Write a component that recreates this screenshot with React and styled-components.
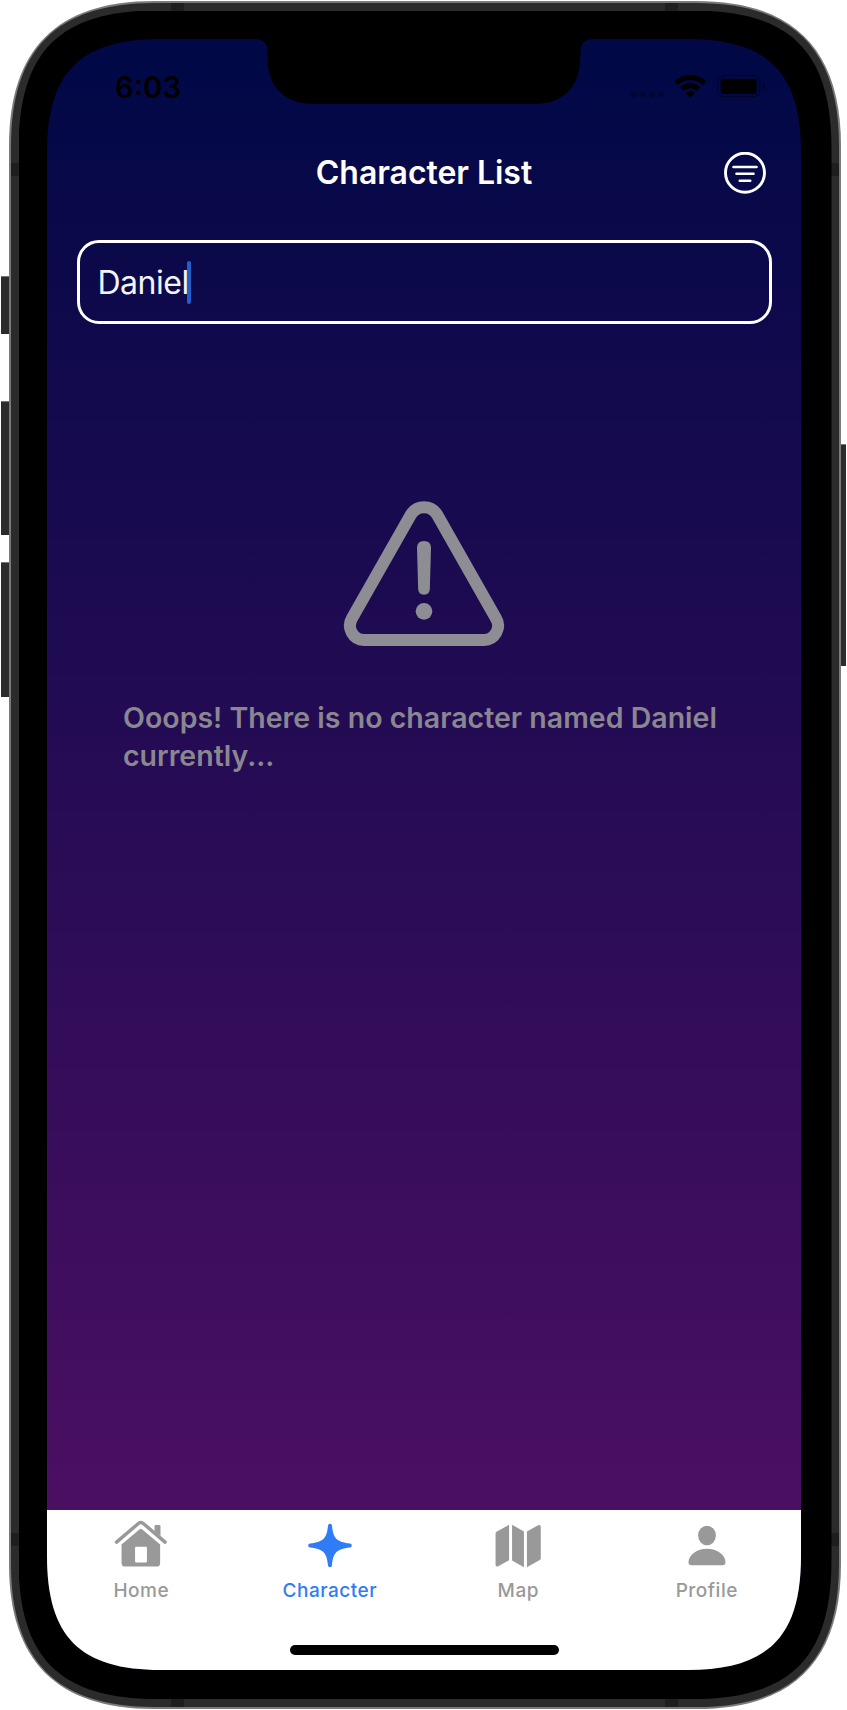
import React from 'react';
import styled, { createGlobalStyle } from 'styled-components';

const GlobalStyle = createGlobalStyle`
  * { box-sizing: border-box; }
  body { margin: 0; background: #fff; }
`;

/* Rounded rectangle with continuous (squircle-like) corners.
   e: where the straight edge ends, a: how far the handles stay from the corner. */
const squircle = (w, h, e, a) =>
  `path("M0 ${e}C0 ${a} ${a} 0 ${e} 0H${w - e}C${w - a} 0 ${w} ${a} ${w} ${e}V${h - e}C${w} ${h - a} ${w - a} ${h} ${w - e} ${h}H${e}C${a} ${h} 0 ${h - a} 0 ${h - e}Z")`;

const Stage = styled.main`
  position: relative;
  width: 847px;
  height: 1710px;
  padding: 1px 6px 0 9px;
  overflow: hidden;
  font-family: Inter, 'Liberation Sans', sans-serif;
`;

const SideButton = styled.span`
  position: absolute;
  top: ${(p) => p.$top}px;
  ${(p) => (p.$right ? 'right: 1px; width: 6px;' : 'left: 1px; width: 8px;')}
  height: ${(p) => p.$height}px;
  background: #2b2c2b;
  border-top: 1px solid #777;
`;

const Rim = styled.div`
  position: relative;
  height: 1708px;
  padding: 2px;
  background: #777b79;
  clip-path: ${squircle(832, 1708, 145, 48)};
`;

const Body = styled.div`
  position: relative;
  height: 1704px;
  padding: 7.5px 7.5px 0;
  background: #2b2b2b;
  clip-path: ${squircle(828, 1704, 143, 46)};
`;

const Antenna = styled.span`
  position: absolute;
  background: #1e1e1e;
  ${(p) => (p.$vertical ? 'width: 8px; height: 13px;' : 'width: 13px; height: 8px;')}
  ${(p) => p.$side}: 0;
  ${(p) => (p.$vertical ? 'top' : 'left')}: ${(p) => p.$at}px;
`;

const Bezel = styled.div`
  position: relative;
  height: 1688.5px;
  padding: 28.5px 0 0 28.5px;
  background: #000;
  clip-path: ${squircle(813, 1688.5, 139, 41)};
`;

const Screen = styled.div`
  position: relative;
  display: flex;
  flex-direction: column;
  width: 754px;
  height: 1631px;
  background: linear-gradient(#000846 0, #4b0f62 1470px);
  clip-path: ${squircle(754, 1631, 114, 33)};
`;

const Notch = styled.svg`
  position: absolute;
  top: 0;
  left: 206px;
  width: 342px;
  height: 65px;
`;

const StatusBar = styled.div`
  display: flex;
  align-items: center;
  justify-content: space-between;
  height: 96px;
  padding: 0 35px 0 68px;
`;

const Time = styled.time`
  margin-top: 2px;
  font-size: 29.3px;
  font-weight: 600;
  line-height: 36px;
  letter-spacing: 0;
  color: #000;
`;

const StatusIcons = styled.svg`
  width: 136px;
  height: 26px;
  margin-bottom: 2px;
`;

const Header = styled.header`
  display: grid;
  grid-template-columns: 1fr auto 1fr;
  align-items: center;
  height: 76px;
  padding: 0 35px;
`;

const Title = styled.h1`
  grid-column: 2;
  margin: 0;
  font-size: 32px;
  font-weight: 600;
  line-height: 40px;
  letter-spacing: -0.05px;
  color: #fff;
`;

const FilterButton = styled.button`
  justify-self: end;
  display: flex;
  padding: 0;
  border: 0;
  background: none;
  color: #fff;

  svg { width: 42px; height: 42px; }
`;

const SearchField = styled.div`
  display: flex;
  align-items: center;
  height: 84px;
  margin: 29px 29.5px 0;
  padding-left: 18px;
  border: 3px solid #fff;
  border-radius: 22px;
`;

const SearchText = styled.span`
  margin-top: 2px;
  font-size: 32px;
  line-height: 40px;
  letter-spacing: -0.5px;
  color: #f4f4f8;
`;

const Caret = styled.span`
  width: 4px;
  height: 43px;
  margin-left: -2px;
  border-radius: 2px;
  background: #235fcc;
`;

const EmptyState = styled.section`
  flex: 1;
  display: flex;
  flex-direction: column;
  align-items: center;
  padding-top: 176.5px;
  color: #8e8d93;
`;

const WarningIcon = styled.svg`
  width: 160px;
  height: 145px;
  overflow: visible;
`;

const Message = styled.p`
  width: 610px;
  margin: 53px 0 0 8px;
  font-size: 28.5px;
  font-weight: 600;
  line-height: 38.7px;
  letter-spacing: 0.01px;
  color: #8a8791;
`;

const TabBar = styled.nav`
  display: grid;
  grid-template-columns: repeat(4, 1fr);
  height: 160.5px;
  padding-top: 9px;
  background: #fff;
`;

const Tab = styled.a`
  display: flex;
  flex-direction: column;
  align-items: center;
  height: 84px;
  color: ${(p) => (p.$active ? '#2f7cf6' : '#999')};

  svg { width: 54px; height: 50px; }
`;

const TabLabel = styled.span`
  margin-top: 10.5px;
  font-size: 19px;
  font-weight: 500;
  line-height: 24px;
  letter-spacing: 0.5px;
`;

const HomeIndicator = styled.span`
  position: absolute;
  left: 243px;
  bottom: 15px;
  width: 269px;
  height: 10px;
  border-radius: 5px;
  background: #000;
`;

const HomeIcon = () => (
  <svg viewBox="222 57 162 150" fill="currentColor">
    <path d="M229 127L296 70Q302 65 309 70L376 127" fill="none" stroke="currentColor" strokeWidth="10.5" strokeLinecap="round" strokeLinejoin="round" />
    <path d="M344 94V79Q344 75 348 75H358Q362 75 362 79V109Z" />
    <path fillRule="evenodd" d="M244 134L299 88Q302 85 306 88L361 134V190Q361 201 350 201H255Q244 201 244 190ZM288 141Q285 141 285 144V186Q285 189 288 189H318Q321 189 321 186V144Q321 141 318 141Z" />
  </svg>
);

const StarIcon = () => (
  <svg viewBox="788.5 57 162 150" fill="currentColor">
    <path d="M863.5 77Q864 71.500 869.500 71.500T875.500 77C879 113 887 127 930 131.500Q935.500 132 935.500 137.500T930 143.500C887 148 879 162 875.500 198Q875 203.500 869.500 203.500T863.500 198C860 162 852 148 809 143.500Q803.500 143 803.500 137.500T809 131.500C852 127 860 113 863.500 77Z" />
  </svg>
);

const MapIcon = () => (
  <svg viewBox="153 57 162 150" fill="currentColor">
    <path d="M166 101Q166 98 169 96L207 74.500V182L174 200.500Q166 203 166 195Z" />
    <path d="M216 74.500L252 95V203L216 183Z" />
    <path d="M261 95L295 76Q303 73 303 81V176Q303 179 300 181L261 203Z" />
  </svg>
);

const ProfileIcon = () => (
  <svg viewBox="719 57 162 150" fill="currentColor">
    <ellipse cx="800" cy="107" rx="27" ry="29.500" />
    <path d="M744 187C744 166 770 147 800 147S856 166 856 187Q856 197 847 197H753Q744 197 744 187Z" />
  </svg>
);

const tabs = [
  { label: 'Home', Icon: HomeIcon },
  { label: 'Character', Icon: StarIcon, active: true },
  { label: 'Map', Icon: MapIcon },
  { label: 'Profile', Icon: ProfileIcon },
];

const antennas = [
  { side: 'top', at: 160 },
  { side: 'top', at: 654 },
  { side: 'bottom', at: 160 },
  { side: 'bottom', at: 654 },
  { side: 'left', at: 160, vertical: true },
  { side: 'right', at: 160, vertical: true },
  { side: 'left', at: 1530, vertical: true },
  { side: 'right', at: 1530, vertical: true },
];

export default function App() {
  const query = 'Daniel';
  return (
    <Stage>
      <GlobalStyle />
      <SideButton $top={276} $height={57.5} />
      <SideButton $top={400.5} $height={134.5} />
      <SideButton $top={562} $height={134.5} />
      <SideButton $right $top={444} $height={222} />
      <Rim>
        <Body>
          {antennas.map((a) => (
            <Antenna key={a.side + a.at} $side={a.side} $at={a.at} $vertical={a.vertical} />
          ))}
          <Bezel>
            <Screen>
              <Notch viewBox="253 39 342 65">
                <path d="M255 39C263 39 267.700 43 267.700 52V60C267.700 87 286 103.700 312 103.700H536C562 103.700 580 87 580 60L580.500 52C580.500 43 585 39 593 39Z" />
              </Notch>
              <StatusBar>
                <Time>6:03</Time>
                <StatusIcons viewBox="31 40 408 78">
                  <g opacity="0.25">
                    <circle cx="43" cy="104" r="9.500" />
                    <circle cx="70" cy="104" r="9.500" />
                    <circle cx="97.500" cy="104" r="9.500" />
                    <circle cx="125" cy="104" r="9.500" />
                  </g>
                  <g fill="none" stroke="#000" strokeWidth="15">
                    <path d="M169.500 71A61 61 0 0 1 254.500 71" />
                    <path d="M187 88A36 36 0 0 1 237 88" />
                  </g>
                  <path d="M198 100Q212 86 226 100L214 112Q212 114 210 112Z" />
                  <rect x="294" y="48" width="126" height="63" rx="17" fill="none" stroke="#000" strokeWidth="4" opacity="0.4" />
                  <rect x="303" y="57" width="108" height="46" rx="8" />
                  <path d="M429 69Q436 72 436 80T429 91Z" opacity="0.5" />
                </StatusIcons>
              </StatusBar>
              <Header>
                <Title>Character List</Title>
                <FilterButton aria-label="Filter">
                  <svg viewBox="0 0 42 42" fill="none" stroke="currentColor" strokeLinecap="round">
                    <circle cx="21" cy="20.700" r="19.500" strokeWidth="2.900" />
                    <path d="M9.500 15H32.500M12.500 21.800H29.500M15.800 28.800H26.200" strokeWidth="2.600" />
                  </svg>
                </FilterButton>
              </Header>
              <SearchField>
                <SearchText>{query}</SearchText>
                <Caret />
              </SearchField>
              <EmptyState>
                <WarningIcon viewBox="72 62 480 435" fill="currentColor">
                  <path d="M132 479H492A43 43 0 0 0 528 414L352 104A46 46 0 0 0 272 104L96 414A43 43 0 0 0 132 479Z" fill="none" stroke="currentColor" strokeWidth="36" />
                  <path d="M291 203Q291 182 312 182T333 203L329.500 326Q329 343 312 343T294.500 326Z" />
                  <circle cx="312" cy="393" r="25" />
                </WarningIcon>
                <Message>Ooops! There is no character named {query} currently...</Message>
              </EmptyState>
              <TabBar>
                {tabs.map(({ label, Icon, active }) => (
                  <Tab key={label} $active={active}>
                    <Icon />
                    <TabLabel>{label}</TabLabel>
                  </Tab>
                ))}
              </TabBar>
              <HomeIndicator />
            </Screen>
          </Bezel>
        </Body>
      </Rim>
    </Stage>
  );
}
